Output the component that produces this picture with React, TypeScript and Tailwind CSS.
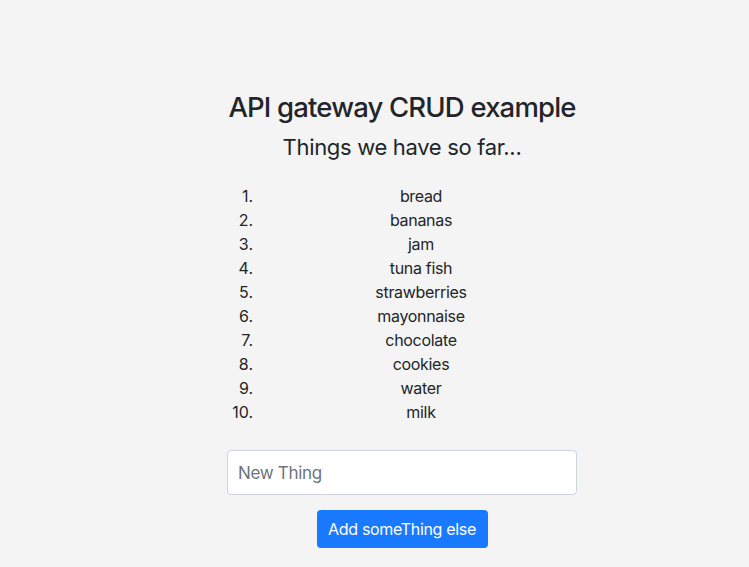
import { useState } from 'react'

const things = [
  'bread', 'bananas', 'jam', 'tuna fish', 'strawberries',
  'mayonnaise', 'chocolate', 'cookies', 'water', 'milk',
]

export default function App() {
  const [newThing, setNewThing] = useState('')

  return (
    <div className="min-h-[567px] bg-[#f4f4f4] text-[#212529] font-['Inter','Liberation_Sans',sans-serif] tracking-[-0.02em]">
      <div className="ml-[227px] w-[350px] pt-[90px]">
        <h2 className="whitespace-nowrap text-center text-[27.5px] leading-[34px] font-medium tracking-[-0.03em]">API gateway CRUD example</h2>
        <h4 className="mt-[10px] whitespace-nowrap text-center text-[22px] leading-[27px] font-normal">Things we have so far...</h4>

        {/* list */}
        <ol className="mt-[23px] text-[16px] leading-[24px]">
          {things.map((t, i) => (
            <li key={t} className="flex">
              <span className="w-[26px] text-right tracking-normal">{i + 1}.</span>
              <span className="w-[324px] shrink-0 pl-[12px] text-center">{t}</span>
            </li>
          ))}
        </ol>

        <input
          type="text"
          placeholder="New Thing"
          value={newThing}
          onChange={(e) => setNewThing(e.target.value)}
          className="mt-[26px] block h-[45px] w-[350px] rounded-[4px] border border-[#ced4da] bg-white px-[10px] text-[17px] placeholder:text-[#6c757d] outline-none"
        />

        <div className="mt-[15px] flex justify-center">
          <button className="h-[38px] w-[171px] rounded-[4px] bg-[#1a7aff] text-[16px] text-white">
            Add someThing else
          </button>
        </div>
      </div>
    </div>
  )
}
